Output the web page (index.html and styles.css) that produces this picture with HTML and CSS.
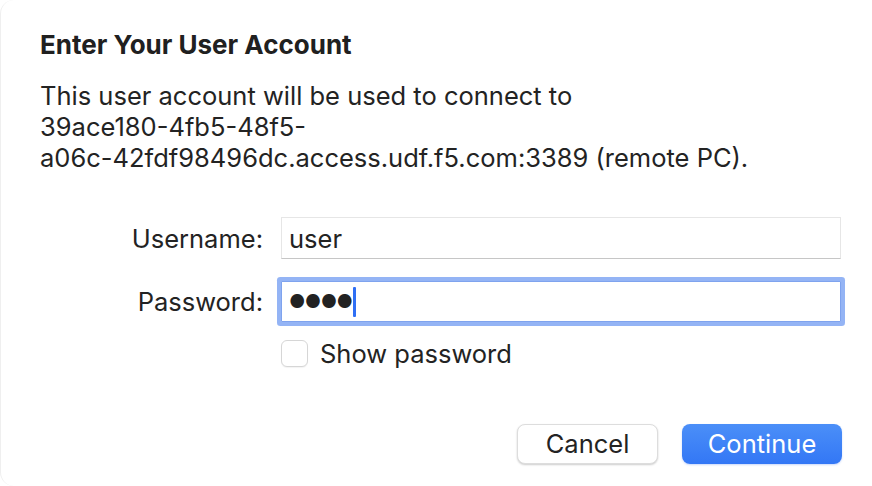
FILE: index.html
```html
<!DOCTYPE html>
<html>
<head>
<meta charset="utf-8">
<link rel="stylesheet" href="styles.css">
</head>
<body>
<div class="dialog">
  <h1 class="title">Enter Your User Account</h1>
  <p class="desc">This user account will be used to connect to<br>39ace180-4fb5-48f5-<br>a06c-42fdf98496dc.access.udf.f5.com:3389 (remote PC).</p>
  <div class="form">
    <div class="row">
      <label class="label">Username:</label>
      <div class="field"><span class="value">user</span></div>
    </div>
    <div class="row row-pw">
      <label class="label">Password:</label>
      <div class="field focused"><span class="dots">●●●●</span><span class="caret"></span></div>
    </div>
    <div class="row row-check">
      <span class="label"></span>
      <div class="check"><span class="box"></span><span class="check-text">Show password</span></div>
    </div>
  </div>
  <div class="buttons">
    <button class="btn cancel">Cancel</button>
    <button class="btn primary">Continue</button>
  </div>
</div>
</body>
</html>
```
FILE: styles.css
```css
html, body {
  margin: 0;
  padding: 0;
  background: #ffffff;
}
body {
  width: 872px;
  height: 486px;
  overflow: hidden;
  font-family: "Inter", "Liberation Sans", sans-serif;
  color: #232323;
}
.dialog {
  box-sizing: border-box;
  width: 872px;
  height: 486px;
  padding: 30px 30px 0 39px;
  border-left: 1px solid #efefef;
  border-radius: 14px 0 0 14px;
}
.title {
  margin: 0;
  font-size: 26px;
  font-weight: 700;
  line-height: 30px;
  color: #202020;
}
.desc {
  margin: 20px 0 0 0;
  font-size: 25.5px;
  line-height: 31px;
  font-weight: 400;
}
.form {
  margin-top: 44px;
  display: flex;
  flex-direction: column;
}
.row {
  display: flex;
  align-items: center;
}
.label {
  box-sizing: border-box;
  width: 241px;
  padding-right: 18px;
  text-align: right;
  font-size: 25.5px;
  flex: none;
}
.field {
  box-sizing: border-box;
  width: 560px;
  height: 42px;
  border: 1px solid #e6e6e6;
  border-bottom-color: #c6c6c6;
  background: #fff;
  display: flex;
  align-items: center;
  padding-left: 7px;
  font-size: 25.5px;
}
.row-pw {
  margin-top: 22px;
}
.field.focused {
  height: 41px;
  border: 1px solid #7fa3ee;
  box-shadow: 0 0 0 4px #94b4f5;
  border-radius: 1px;
}
.dots {
  font-size: 18px;
  letter-spacing: -0.6px;
  color: #222;
  line-height: 1;
}
.caret {
  display: inline-block;
  width: 3px;
  height: 30px;
  background: #2f6ff5;
  border-radius: 1px;
  margin-left: 1px;
}
.row-check {
  margin-top: 16px;
}
.check {
  display: flex;
  align-items: center;
}
.box {
  box-sizing: border-box;
  width: 27px;
  height: 27px;
  border: 1px solid #d6d6d6;
  border-radius: 6px;
  background: #fff;
  box-shadow: 0 1px 1px rgba(0,0,0,0.05);
}
.check-text {
  margin-left: 12px;
  font-size: 25.5px;
}
.buttons {
  margin-top: 55px;
  display: flex;
  justify-content: flex-end;
  gap: 24px;
}
.btn {
  box-sizing: border-box;
  height: 40px;
  border-radius: 8px;
  font-family: inherit;
  font-size: 25.5px;
  padding: 0;
  line-height: 1;
}
.cancel {
  width: 141px;
  background: #fff;
  color: #232323;
  border: 1px solid #dddddd;
  box-shadow: 0 1px 2px rgba(0,0,0,0.2);
}
.primary {
  width: 160px;
  color: #fff;
  border: none;
  background: linear-gradient(#4b8ff8, #3377f5);
  box-shadow: 0 1px 2px rgba(40,100,240,0.25);
}
```
